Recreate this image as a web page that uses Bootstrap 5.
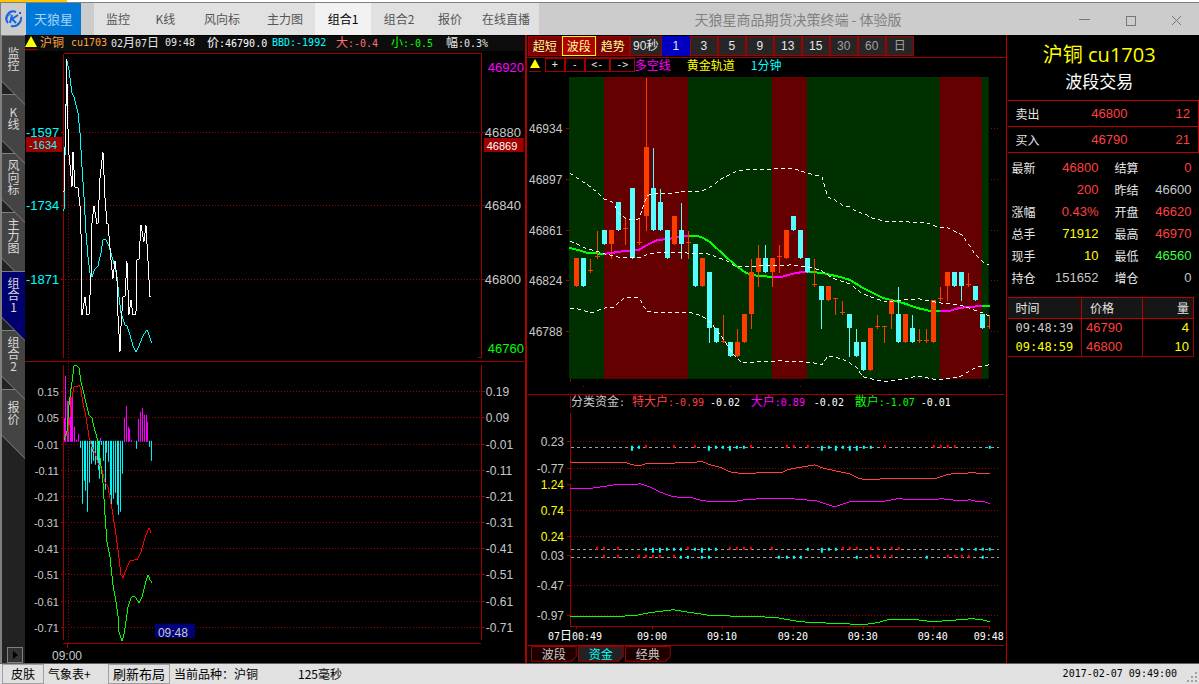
<!DOCTYPE html>
<html lang="zh-CN">
<head>
<meta charset="utf-8">
<meta name="viewport" content="width=device-width, initial-scale=1">
<title>天狼星商品期货决策终端 - 体验版</title>
<link rel="stylesheet" href="https://cdn.jsdelivr.net/npm/bootstrap@5.3.0/dist/css/bootstrap.min.css">
<style>
:root{--line:#a00000;--line-hi:#c00000;--up:#ff4040;--num:#c8c8c8}
body{background:#000;color:#e6e6e6;font-family:"Liberation Sans","Noto Sans CJK SC",sans-serif;font-size:12px;line-height:14px}
button{border:0;border-radius:0;padding:0;background:none;color:inherit;font:inherit}
.mono{font-family:"DejaVu Sans Mono","Noto Sans CJK SC",monospace;font-size:10px}
.mono b,.hz{font-family:"Noto Sans CJK SC",sans-serif;font-size:12px;font-weight:400}
.cy{color:#0ff}.ye{color:#ff0}.re{color:var(--up)}.gn{color:#3cff3c}.lime{color:#0f0}.or{color:#ffa640}.pk{color:#ff7070}.ma{color:#f0f}.gy{color:var(--num)}

/* title bar */
.topstrip{height:3px;background:linear-gradient(90deg,#ffc800 67px,#fff 67px);border-bottom:1px solid #808080}
.titlebar{height:32px;background:#ccc;color:#808080;border-left:1px solid #808080;font-family:"Noto Sans CJK SC",sans-serif}
.logo{width:25px}
.brand{width:55px;background:#0078d7;color:#a6d4fa;font-size:13px}
.maintabs{display:grid;grid-template-columns:48px 47px 66px 60px 56px 56px 46px 66px;margin-left:13px;background:#e1e1e1;color:#555}
.maintabs .active{background:#f2f2f2;color:#000}
.apptitle{font-size:14px;color:#808080}
.winbtn{width:46px}

/* side tabs */
.side{flex:0 0 25px;background:#222;border-left:2px solid #808080}
.side ul{margin:0;padding:0;list-style:none}
.side li{position:relative;height:59px}
.side li:nth-child(1){z-index:7}.side li:nth-child(2){z-index:6}.side li:nth-child(3){z-index:5}
.side li:nth-child(4){z-index:4}.side li:nth-child(5){z-index:8}.side li:nth-child(6){z-index:3}
.side button{position:relative;display:flex;justify-content:center;align-items:flex-start;width:23px;height:70px;background:#808080;clip-path:polygon(0 0,100% 0,100% 100%,0 47px)}
.side button::before{content:"";position:absolute;inset:1px 0 0 0;background:#444;clip-path:polygon(0 0,100% 0,100% 68px,0 45px)}
.side .active button::before{background:#00006e}
.side span{position:relative;display:flex;flex-direction:column;justify-content:center;height:47px;width:12px;line-height:12px;text-align:center;word-break:break-all;font-family:"Noto Sans CJK SC",sans-serif;color:#d8d8d8}
.expander{width:16px;height:16px;margin:0 0 0 5px;background:#333;border:1px solid #808080}

/* left column */
.colleft{flex:500 1 0;min-width:0}
.colmid{flex:479 1 0;min-width:0;border-left:2px solid #b00000}
.colright{flex:0 0 193px;border-left:1px solid var(--line-hi)}
.quote{display:grid;grid-template-columns:15px 31px 40px 54px 42px 65px 64px 55px 55px auto;height:16px;align-items:center;background:linear-gradient(#000 1px,#0d0d0d 1px);white-space:nowrap}
.tri{width:12px;height:14px;border-bottom:1px solid var(--line)}
.tri svg{display:block}
svg.plot{display:block;width:100%;height:auto}
svg.plot text{fill:var(--num);font-size:12px}
svg.plot .t13{font-size:13px}svg.plot .t11{font-size:11px}
svg.plot .mono{font-size:10px}svg.plot .mono tspan.hz{font-size:12px}
svg.plot .cy{fill:#0ff}svg.plot .ye{fill:#ff0}svg.plot .re{fill:var(--up)}svg.plot .lime{fill:#0f0}svg.plot .ma{fill:#f0f}svg.plot .wh{fill:#fff}
svg.plot .end{text-anchor:end}
.grid{stroke:var(--line);fill:none;shape-rendering:crispEdges}
.dots{stroke-dasharray:1 2}
.curve{fill:none;shape-rendering:crispEdges}

/* middle column */
.periods{height:21px;padding:1px 0 0 1px}
.periods button{width:28px;height:20px;border:1px solid var(--line);background:#262626;color:#e6e6e6}
.periods .wide{width:34px;background:#780000;color:#ffff9c}
.periods .wide.active{background:#b00000;border-color:#ff0}
.periods .w32{width:32px}
.periods .sel{background:#0000c0;border-color:#0000c0}
.periods .dim{color:#a0a0a0}
.tools{height:16px;border-top:1px solid var(--line);margin-top:1px;padding-left:2px}
.tools button{width:20px;height:14px;border:1px solid var(--line);line-height:10px}
.tools .w25{width:25px}
.subtabs{height:17px;padding-left:4px;gap:1px}
.subtabs button{position:relative;width:46px;height:16px;background:var(--line);color:#c8c8c8;clip-path:polygon(0 0,100% 0,100% 11px,41px 100%,0 100%)}
.subtabs button::before{content:"";position:absolute;inset:1px;background:#1c0000;clip-path:polygon(0 0,100% 0,100% 10px,39px 100%,0 100%)}
.subtabs .active::before{background:#222}
.subtabs span{position:relative}
.subtabs .active{color:#0ff}

/* right column */
.colright h1{font:20px/26px "Open Sans","Noto Sans CJK SC",sans-serif;color:#ff0;margin:7px 0 0 -7px;text-align:center}
.colright h2{font:17px/26px "Noto Sans CJK SC",sans-serif;color:#fff;margin:0 0 0 -7px;text-align:center}
.colright table{border-collapse:collapse;table-layout:fixed}
.colright td{padding:0;font-size:13px}
.colright th{padding:0;font-weight:400;font-family:"Noto Sans CJK SC",sans-serif;font-size:12px}
.bidask{width:191px;margin:6px 0 0 1px;border:1px solid var(--line-hi);border-left:0}
.bidask tr{height:26px}
.bidask tr+tr{border-top:1px solid var(--line-hi)}
.stats{width:184px;margin:4px 0 0 1px}
.stats tr{height:22px}
.ticks{width:186px;margin:8px 0 0 1px}
.ticks th{height:21px;background:#161616;border:1px solid var(--line-hi)}
.ticks td{height:19px;border:0 solid var(--line);border-right-width:1px}
.ticks tbody tr:last-child{border-bottom:1px solid var(--line)}
.ticks td.mono{font-size:12px}

/* status bar */
.status{height:21px;background:#e1e1e1;color:#000;border-top:1px solid #606060;font-family:"Noto Sans CJK SC",sans-serif;padding-left:2px}
.status button{height:20px;border:1px solid #a0a0a0}
.status .weather{width:64px}
.status .delay{margin-left:40px}
</style>
</head>
<body class="d-flex flex-column min-vh-100">
<div class="topstrip"></div>
<header class="titlebar d-flex">
  <div class="logo d-flex align-items-center justify-content-center">
    <svg width="18" height="18" viewBox="0 0 18 18" fill="none" stroke="#1464e6" stroke-width="2"><path d="M11 2A7 7 0 0 0 3 13M6 16A8 8 0 0 0 16 7"/><path d="M2 12A7 7 0 0 1 6 4M12 14A7 7 0 0 0 16 10" stroke-width="1"/><path d="M7 5L5 13M13 5L7 9L11 13"/><path d="M14 3h2"/></svg>
  </div>
  <button type="button" class="brand">天狼星</button>
  <nav class="maintabs">
    <button type="button">监控</button><button type="button">K线</button><button type="button">风向标</button><button type="button">主力图</button><button type="button" class="active">组合1</button><button type="button">组合2</button><button type="button">报价</button><button type="button">在线直播</button>
  </nav>
  <div class="apptitle flex-grow-1 d-flex align-items-center justify-content-center pe-1">天狼星商品期货决策终端 - 体验版</div>
  <button type="button" class="winbtn" aria-label="最小化"><svg width="11" height="11" stroke="#777" shape-rendering="crispEdges"><path d="M0 4h11"/></svg></button>
  <button type="button" class="winbtn" aria-label="最大化"><svg width="11" height="11" stroke="#777" fill="none" shape-rendering="crispEdges"><path d="M1 1h9v9h-9z"/></svg></button>
  <button type="button" class="winbtn" aria-label="关闭"><svg width="11" height="11" stroke="#777"><path d="M1 1l9 9M10 1l-9 9"/></svg></button>
</header>

<main class="d-flex flex-grow-1">
  <nav class="side d-flex flex-column justify-content-between">
    <ul>
      <li><button type="button"><span>监控</span></button></li>
      <li><button type="button"><span>K线</span></button></li>
      <li><button type="button"><span>风向标</span></button></li>
      <li><button type="button"><span>主力图</span></button></li>
      <li class="active"><button type="button"><span>组合1</span></button></li>
      <li><button type="button"><span>组合2</span></button></li>
      <li><button type="button"><span>报价</span></button></li>
    </ul>
    <a href="#" class="expander d-flex align-items-center justify-content-center" aria-label="展开"><svg width="5" height="8"><path d="M0 0l5 4-5 4z"/></svg></a>
  </nav>

  <section class="colleft">
    <div class="quote mono">
      <div class="tri"><svg width="12" height="12"><path d="M6 0l6 11H0z" fill="#ff0"/></svg></div>
      <span class="or"><b>沪铜</b></span><span class="or">cu1703</span><span>02<b>月</b>07<b>日</b></span><span>09:48</span><span class="text-white"><b>价</b>:46790.0</span><span class="cy">BBD:-1992</span><span class="pk"><b>大</b>:-0.4</span><span class="lime"><b>小</b>:-0.5</span><span><b>幅</b>:0.3%</span>
    </div>
    <svg class="plot" id="leftPlot" viewBox="25 51 500 612">
      <g class="grid">
        <path d="M64 358V54H482V358M478 358H482M25 362H524M64 365V640M482 365V640M63 644H481M68 643V648"/>
        <path d="M61 133H64M61 206H64M61 280H64M482 133H485M482 206H485M482 280H485"/>
        <path class="dots" d="M65 133H482M65 206H482M65 280H482M69 54V644"/>
        <path class="dots" d="M65 392H482M65 418H482M65 445H482M65 471H482M65 497H482M65 523H482M65 549H482M65 575H482M65 602H482M65 628H482"/>
        <path d="M61 392H64M61 418H64M61 445H64M61 471H64M61 497H64M61 523H64M61 549H64M61 575H64M61 602H64M61 628H64M482 392H485M482 418H485M482 445H485M482 471H485M482 497H485M482 523H485M482 549H485M482 575H485M482 602H485M482 628H485"/>
      </g>
      <rect x="26" y="137" width="36" height="15" fill="#a00000"/>
      <rect x="484" y="138" width="40" height="14" fill="#a00000"/>
      <rect x="155" y="624" width="40" height="14" fill="#000078"/>
      <text class="t13 cy" x="26" y="137">-1597</text><text class="t13 cy" x="26" y="210">-1734</text><text class="t13 cy" x="26" y="284">-1871</text>
      <text class="t11 cy" x="29" y="149">-1634</text><text class="t11 wh" x="487" y="150">46869</text>
      <text class="t13 ma" x="488" y="72">46920</text><text class="t13" x="485" y="137">46880</text><text class="t13" x="485" y="210">46840</text><text class="t13" x="485" y="284">46800</text><text class="t13 lime" x="488" y="353">46760</text>
      <g id="leftScale"></g>
      <text x="52" y="660">09:00</text><text x="158" y="637">09:48</text>
    </svg>
  </section>

  <section class="colmid">
    <div class="periods d-flex">
      <button type="button" class="wide hz">超短</button><button type="button" class="wide active hz">波段</button><button type="button" class="wide hz">趋势</button><button type="button" class="w32">90秒</button><button type="button" class="sel">1</button><button type="button">3</button><button type="button">5</button><button type="button">9</button><button type="button">13</button><button type="button">15</button><button type="button" class="dim">30</button><button type="button" class="dim">60</button><button type="button" class="dim">日</button>
    </div>
    <div class="tools d-flex">
      <div class="tri me-1"><svg width="12" height="12"><path d="M6 1l5 9H1z" fill="#ff0"/></svg></div>
      <button type="button" class="mono">+</button><button type="button" class="mono">-</button><button type="button" class="mono w25">&lt;-</button><button type="button" class="mono w25">-&gt;</button><span class="hz ma">多空线</span><span class="hz ye ms-3">黄金轨道</span><span class="hz cy ms-3">1分钟</span>
    </div>
    <svg class="plot" id="midPlot" viewBox="527 73 479 573">
      <rect x="569" y="77" width="420" height="302" fill="#003000"/>
      <g fill="#640000"><rect x="604" y="77" width="84" height="302"/><rect x="772" y="77" width="35" height="302"/><rect x="940" y="77" width="42" height="302"/></g>
      <g class="grid">
        <path d="M566 129H569M566 180H569M566 231H569M566 281H569M566 332H569M571 379V382M583 387h1M660 387h1M730 387h1M800 387h1M870 387h1M940 387h1M989 387h1"/>
        <path class="dots" d="M991 129h8M991 180h8M991 231h8M991 281h8M991 332h8"/>
        <path d="M528 395H1004M571 396V408M571 413V480M571 484V553M571 556V626M570 627H990M528 646H1004M577 627V629M653 627V629M723 627V629M794 627V629M864 627V629M934 627V629M990 627V629"/>
        <path d="M567 442H571M567 469H571M567 485H571M567 511H571M567 537H571M567 556H571M567 586H571M567 616H571"/>
        <path class="dots" d="M571 442H999M571 469H999M571 511H999M571 537H999M571 586H999M571 616H999"/>
        <path stroke="#a0a0a0" stroke-dasharray="3 3" d="M571 448H999M571 550H999M571 558H999"/>
      </g>
      <g id="candles" shape-rendering="crispEdges"></g>
      <g><text x="529" y="133">46934</text><text x="529" y="184">46897</text><text x="529" y="235">46861</text><text x="529" y="285">46824</text><text x="529" y="336">46788</text></g>
      <g><text class="end" x="564" y="446">0.23</text><text class="end" x="564" y="473">-0.77</text><text class="end ye" x="564" y="489">1.24</text><text class="end ye" x="564" y="515">0.74</text><text class="end ye" x="564" y="541">0.24</text><text class="end" x="564" y="560">0.03</text><text class="end" x="564" y="590">-0.47</text><text class="end" x="564" y="620">-0.97</text></g>
      <text class="mono" x="571" y="406"><tspan class="hz">分类资金</tspan>:</text>
      <text class="mono re" x="632" y="406"><tspan class="hz">特大户</tspan>:-0.99</text><text class="mono wh" x="710" y="406">-0.02</text>
      <text class="mono ma" x="751" y="406"><tspan class="hz">大户</tspan>:0.89</text><text class="mono wh" x="814" y="406">-0.02</text>
      <text class="mono lime" x="855" y="406"><tspan class="hz">散户</tspan>:-1.07</text><text class="mono wh" x="921" y="406">-0.01</text>
      <text class="mono wh" x="548" y="640">07<tspan class="hz">日</tspan>00:49</text><text class="mono wh" x="637" y="640">09:00</text><text class="mono wh" x="707" y="640">09:10</text><text class="mono wh" x="778" y="640">09:20</text><text class="mono wh" x="848" y="640">09:30</text><text class="mono wh" x="918" y="640">09:40</text><text class="mono wh" x="974" y="640">09:48</text>
    </svg>
    <div class="subtabs d-flex">
      <button type="button" class="hz"><span>波段</span></button><button type="button" class="hz active"><span>资金</span></button><button type="button" class="hz"><span>经典</span></button>
    </div>
  </section>

  <aside class="colright">
    <h1>沪铜 cu1703</h1>
    <h2>波段交易</h2>
    <table class="bidask">
      <colgroup><col width="58"><col width="62"><col width="71"></colgroup>
      <tr><th scope="row" class="ps-2">卖出</th><td class="re text-end">46800</td><td class="re text-end pe-2">12</td></tr>
      <tr><th scope="row" class="ps-2">买入</th><td class="re text-end">46790</td><td class="re text-end pe-2">21</td></tr>
    </table>
    <table class="stats">
      <colgroup><col width="36"><col width="55"><col width="44"><col width="49"></colgroup>
      <tr><th scope="row" class="ps-1">最新</th><td class="re text-end">46800</td><th scope="row" class="ps-3">结算</th><td class="re text-end">0</td></tr>
      <tr><th></th><td class="re text-end">200</td><th scope="row" class="ps-3">昨结</th><td class="gy text-end">46600</td></tr>
      <tr><th scope="row" class="ps-1">涨幅</th><td class="re text-end">0.43%</td><th scope="row" class="ps-3">开盘</th><td class="re text-end">46620</td></tr>
      <tr><th scope="row" class="ps-1">总手</th><td class="ye text-end">71912</td><th scope="row" class="ps-3">最高</th><td class="re text-end">46970</td></tr>
      <tr><th scope="row" class="ps-1">现手</th><td class="ye text-end">10</td><th scope="row" class="ps-3">最低</th><td class="gn text-end">46560</td></tr>
      <tr><th scope="row" class="ps-1">持仓</th><td class="gy text-end">151652</td><th scope="row" class="ps-3">增仓</th><td class="gy text-end">0</td></tr>
    </table>
    <table class="ticks">
      <colgroup><col width="74"><col width="61"><col width="51"></colgroup>
      <thead><tr><th scope="col" class="ps-2 border-start-0">时间</th><th scope="col" class="ps-2">价格</th><th scope="col" class="text-end pe-1">量</th></tr></thead>
      <tbody>
        <tr><td class="mono gy ps-2">09:48:39</td><td class="re ps-1">46790</td><td class="ye text-end pe-1">4</td></tr>
        <tr><td class="mono ye ps-2">09:48:59</td><td class="re ps-1">46800</td><td class="ye text-end pe-1">10</td></tr>
      </tbody>
    </table>
  </aside>
</main>

<footer class="status d-flex align-items-center">
  <button type="button" class="px-2">皮肤</button>
  <a href="#" class="weather text-black text-decoration-none ps-1">气象表+</a>
  <button type="button" class="px-1" style="font-size:13px">刷新布局</button>
  <span class="ms-1">当前品种：沪铜</span>
  <span class="delay">125毫秒</span>
  <span class="mono ms-auto me-2">2017-02-07 09:49:00</span>
  <svg width="14" height="14" class="align-self-end" fill="#a0a0a0"><path d="M10 2h2v2h-2zM10 6h2v2h-2zM10 10h2v2h-2zM6 6h2v2h-2zM6 10h2v2h-2zM2 10h2v2h-2z"/></svg>
</footer>

<script src="https://cdn.jsdelivr.net/npm/bootstrap@5.3.0/dist/js/bootstrap.bundle.min.js"></script>
<script>
// Series are stored in thirds of a plot unit, relative to an origin.
const NS = 'http://www.w3.org/2000/svg';
function add(parent, tag, attrs, text) {
  const el = document.createElementNS(NS, tag);
  for (const k in attrs) el.setAttribute(k, attrs[k]);
  if (text) el.textContent = text;
  parent.appendChild(el);
  return el;
}
const unit = v => Math.round(v / 3);
function curve(svg, ox, oy, color, data, extra) {
  const points = data.trim().split(/\s+/).map(p => { const [x, y] = p.split(',').map(Number); return (ox + unit(x)) + ',' + (oy + unit(y)); }).join(' ');
  add(svg, 'polyline', Object.assign({ class: 'curve', stroke: color, points }, extra));
}
const L = document.getElementById('leftPlot'), M = document.getElementById('midPlot'), C = document.getElementById('candles');

// Left scales
const S = document.getElementById('leftScale');
[392, 418, 445, 471, 497, 523, 549, 575, 602, 628].forEach((y, i) => {
  const lab = ['0.15', '0.05', '-0.01', '-0.11', '-0.21', '-0.31', '-0.41', '-0.51', '-0.61', '-0.71'][i];
  const right = ['0.19', '0.09'][i] || lab;
  add(S, 'text', { class: 't11 end', x: 59, y: y + 4 }, lab);
  add(S, 'text', { x: 486, y: y + 4 }, right);
});

// Price and BBD
curve(L, 0, 40, '#0ff', '193,512 196,350 199,200 202,62 207,90 217,160 222,172 233,220 240,280 246,380 253,470 257,580 265,650 270,700 275,711 285,688 295,678 303,640 310,600 318,600 326,618 333,640 345,680 352,710 356,770 362,820 370,838 376,855 382,858 390,885 400,917 409,935 418,917 430,888 440,870 445,875 449,895 455,908');
curve(L, 0, 40, '#fff', '193,455 197,195 200,58 200,130 205,265 208,345 211,375 217,440 220,335 226,440 233,445 241,495 243,575 247,770 247,825 254,772 262,825 268,825 274,710 277,550 283,497 290,552 295,552 301,415 310,335 316,470 320,552 325,552 330,625 333,660 340,717 345,662 350,717 354,825 360,937 364,860 368,772 376,772 382,662 388,825 392,780 398,825 409,825 412,660 418,660 424,554 431,607 439,554 445,660 449,772 452,772');

// Histogram, base line at 441
const up = '196,190 199,64 205,137 208,137 212,100 216,137 220,118 226,216 232,255 238,237 304,249 374,255 376,190 382,153 388,216 391,222 397,255 404,258 418,192 424,171 430,159 436,180 440,180 445,201';
const down = '241,279 247,447 253,378 256,408 262,471 268,384 274,328 277,290 280,318 284,330 290,324 295,345 298,372 304,270 310,318 316,405 319,294 325,321 331,420 333,453 340,432 346,414 352,450 355,480 361,471 367,357 409,282 448,276 454,318';
up.split(' ').forEach(p => { const [x, y] = p.split(',').map(unit); add(L, 'rect', { x: x - 1, y: 355 + y, width: 1, height: 87 - y, fill: '#f0f' }); });
down.split(' ').forEach(p => { const [x, y] = p.split(',').map(unit); add(L, 'rect', { x: x, y: 441, width: 1, height: y - 86, fill: '#0ff' }); });
curve(L, 0, 355, '#f00', '193,255 203,230 210,190 216,125 222,97 232,96 238,90 243,105 250,145 257,185 267,245 275,275 285,295 295,325 305,345 314,380 323,395 330,430 338,480 348,540 356,610 363,660 370,668 378,645 390,617 405,614 412,615 424,592 435,550 446,520 452,533');
curve(L, 0, 355, '#0f0', '193,255 200,230 208,150 215,80 222,32 230,33 237,40 243,80 250,105 258,145 267,180 275,190 283,215 292,250 300,310 308,380 315,480 322,560 330,605 340,690 348,740 353,780 358,830 367,857 373,840 378,800 385,760 392,730 402,723 410,735 418,745 426,730 435,690 445,660 450,675 455,683');

// Trend line, drawn beneath the candles
const two = { 'stroke-width': 2 };
// Candles: colour, body top, body bottom, high, low (top = bottom marks a doji)
const bars = 'R564,648,564,651 C564,648,564,651 R604,604,567,609 R562,562,483,567 C480,522,480,525 R480,522,480,567 C396,480,396,483 R478,478,441,525 C354,564,354,567 R520,520,444,525 R231,438,24,483 C354,480,234,483 C396,480,357,483 C480,564,480,567 R438,522,438,525 C480,522,399,567 R520,520,483,567 C522,648,522,651 R564,648,564,651 C606,774,606,819 C774,816,774,819 R815,815,735,819 C816,858,816,861 R816,858,777,861 R732,816,732,819 R606,732,567,777 R564,606,525,651 C564,606,525,609 R564,606,564,651 R562,562,525,609 R480,564,480,567 C438,480,438,483 C480,564,480,567 C564,606,564,609 R646,646,567,651 C648,690,648,777 R648,690,648,693 R688,688,688,735 R730,730,693,735 C732,774,732,861 C816,858,777,861 C816,900,816,903 R774,900,774,903 R772,772,735,777 R772,772,772,819 R690,732,690,777 C732,816,651,819 R732,816,732,819 C774,816,735,819 R814,814,777,819 R814,814,777,819 R690,816,690,819 R688,688,651,693 R606,648,606,693 C606,648,606,651 C606,648,606,693 R646,646,609,651 C648,690,648,693 C732,774,732,777 R772,772,735,777';
const trend = [['#0f0', '132,535 160,541 185,548 237,552'], ['#f0f', '237,552 262,550 300,544 343,541 365,525 400,511 435,507 455,500 489,497'], ['#0f0', '489,497 515,499 535,503 555,516 600,558 630,585 662,608 700,617 741,621'], ['#f0f', '741,621 770,620 800,611 835,606 853,606'], ['#0f0', '853,606 890,610 945,620 975,631 1015,655 1075,683 1135,698 1175,713 1215,722 1245,723'], ['#f0f', '1245,723 1275,722 1305,715 1371,708'], ['#0f0', '1371,708 1395,708']];
trend.forEach(([c, d]) => curve(C, 525, 70, c, d, two));
bars.split(' ').forEach((b, i) => {
  const fill = b[0] === 'R' ? '#ff3c00' : '#5ff', [t, m, h, l] = b.slice(1).split(',').map(unit), x = 574 + 7 * i;
  add(C, 'rect', { x: x + 2, y: 70 + h, width: 1, height: l - h, fill });
  add(C, 'rect', { x, y: 70 + t - (t === m ? 1 : 0), width: Math.min(5, 990 - x), height: Math.max(m - t, 1), fill });
});
// Upper, middle and lower bands
const dash = { 'stroke-dasharray': '4 3' };
curve(M, 525, 70, '#fff', '135,310 155,325 190,345 215,367 238,388 260,395 285,432 305,449 343,448 355,410 365,378 385,370 430,372 465,366 530,364 560,348 595,323 635,304 655,301 705,301 750,298 790,295 810,296 845,310 870,314 890,322 910,380 930,390 950,405 975,410 995,427 1020,432 1040,445 1060,446 1080,457 1145,457 1205,460 1245,475 1270,475 1310,495 1330,520 1350,553 1375,575 1393,584', dash);
curve(M, 525, 70, '#fff', '135,514 180,535 240,553 290,564 343,565 365,553 410,547 550,552 590,567 625,585 655,592 705,589 805,586 865,594 890,603 920,623 975,642 1015,673 1080,697 1135,691 1185,688 1245,700 1305,706 1355,722 1393,738', dash);
curve(M, 525, 70, '#fff', '135,717 160,718 200,730 240,715 265,713 300,682 343,683 365,727 500,728 530,737 560,762 590,802 620,850 650,879 705,876 765,874 830,875 865,879 890,886 910,859 930,862 965,874 995,895 1015,922 1080,937 1145,927 1175,918 1240,929 1305,920 1355,890 1393,886', dash);

// Money flow curves
curve(M, 525, 385, '#ff4040', '135,231 150,233 305,233 320,240 345,244 362,238 435,238 455,235 535,232 555,241 590,250 615,262 655,268 705,265 767,265 790,255 815,250 870,240 890,249 945,260 975,267 1005,281 1035,286 1075,283 1230,283 1265,270 1285,268 1345,265 1395,268');
curve(M, 525, 385, '#f0f', '135,313 185,313 230,305 270,301 325,301 345,298 375,307 410,325 445,335 500,338 535,347 570,352 625,352 660,346 705,342 800,342 875,347 890,355 930,365 975,352 1050,350 1090,347 1115,343 1195,344 1215,346 1250,343 1275,346 1310,349 1335,346 1360,350 1380,352 1395,356');
curve(M, 525, 385, '#0f0', '135,697 228,695 330,692 375,685 445,676 500,683 560,692 580,694 705,695 755,698 825,712 880,713 960,716 1015,721 1060,715 1090,706 1175,706 1225,712 1305,706 1340,703 1370,705 1395,710');
// Buy (red) and sell (cyan) marks on each dashed base line
const marks = [
  [447, '362 446 509 677 785 806 848 1079 1226 1247 1268 1289', '320 341 551 572 593 614 635 656 890 911 932 953 974 995 1016 1037 1394', [320, 551, 614, 890, 932, 974, 995]],
  [549, '215 236 278 488 614 635 656 677 741 953 974 995 1037 1058 1100 1121', '362 383 404 425 446 467 509 530 551 572 848 890 911 932 1310 1352 1373 1394', [383, 404, 530, 890]],
  [557, '236 278 341 362 383 404 446 1037 1058 1079 1100 1268 1289 1310 1331', '467 488 530 551 762 785 806 827 995 1205 1373', []]
];
marks.forEach(([y, red, cyan, long]) => {
  red.split(' ').forEach(v => add(M, 'rect', { x: 524 + unit(+v), y: y - 2, width: 2, height: 3, fill: '#f00' }));
  cyan.split(' ').forEach(v => add(M, 'rect', { x: 524 + unit(+v), y: y - 1, width: 2, height: long.includes(+v) ? 5 : 3, fill: '#0ff' }));
});
</script>
</body>
</html>
